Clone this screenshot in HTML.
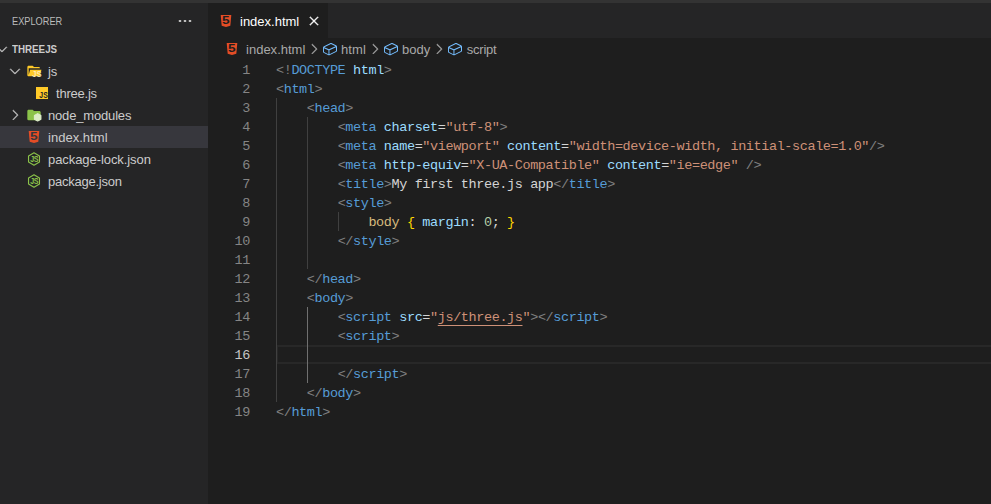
<!DOCTYPE html>
<html>
<head>
<meta charset="utf-8">
<title>index.html - threejs</title>
<style>
*{box-sizing:border-box;margin:0;padding:0}
html,body{width:991px;height:504px;overflow:hidden;background:#1e1e1e}
body{position:relative;font-family:"Liberation Sans",sans-serif;font-size:13px;color:#ccc}
.abs{position:absolute}
#topstrip{left:0;top:0;width:991px;height:3px;background:#333333}
#sidebar{left:0;top:3px;width:208px;height:501px;background:#252526}
#tabbar{left:208px;top:3px;width:783px;height:35px;background:#252526}
#tab{left:208px;top:3px;width:120px;height:35px;background:#1e1e1e}
.t{position:absolute;white-space:nowrap;line-height:22px;height:22px}
.row{position:absolute;left:0;width:208px;height:22px}
.sel{background:#37373d}
.code{position:absolute;left:276px;margin-top:1px;white-space:pre;font-family:"Liberation Mono",monospace;font-size:13.5px;letter-spacing:-0.4px;line-height:19px;height:19px;color:#d4d4d4}
.ln{position:absolute;left:208px;width:42px;margin-top:1px;text-align:right;font-family:"Liberation Mono",monospace;font-size:13.5px;letter-spacing:-0.4px;line-height:19px;height:19px;color:#858585}
.g{color:#808080}.b{color:#569cd6}.l{color:#9cdcfe}.s{color:#ce9178}.y{color:#d7ba7d}.n{color:#b5cea8}.br{color:#ffd700}
.cur{color:#c6c6c6}
u{text-decoration:underline;text-decoration-thickness:1px;text-underline-offset:3.500px;text-decoration-skip-ink:none}
.guide{position:absolute;width:1px;background:#404040}
</style>
</head>
<body>
<div class="abs" id="topstrip"></div>
<div class="abs" id="sidebar"></div>
<div class="abs" id="tabbar"></div>
<div class="abs" id="tab"></div>

<!-- sidebar -->
<div class="t" id="t_explorer" style="transform:scaleX(0.838);transform-origin:0 0;left:12px;top:10px;font-size:11px;color:#bbbbbb">EXPLORER</div>
<svg class="abs" style="left:177px;top:13px" width="16" height="16" viewBox="0 0 16 16"><ellipse cx="3" cy="8" rx="1.400" ry="1.100" fill="#d0d0d0"/><ellipse cx="8" cy="8" rx="1.400" ry="1.100" fill="#d0d0d0"/><ellipse cx="13" cy="8" rx="1.400" ry="1.100" fill="#d0d0d0"/></svg>
<svg class="abs" style="left:-6px;top:41px" width="16" height="16" viewBox="0 0 16 16"><path d="M7.976 10.072l4.357-4.357.62.618L8.284 11h-.618L3 6.333l.619-.618 4.357 4.357z" fill="#c5c5c5" stroke="#c5c5c5" stroke-width="0.400"/></svg>
<div class="t" id="t_threejs" style="transform:scaleX(0.889);transform-origin:0 0;left:12px;top:38px;font-size:11px;font-weight:bold;color:#cccccc">THREEJS</div>
<div class="row sel" style="top:126px"></div>
<svg class="abs" style="left:7px;top:63px" width="16" height="16" viewBox="0 0 16 16"><path d="M7.976 10.072l4.357-4.357.62.618L8.284 11h-.618L3 6.333l.619-.618 4.357 4.357z" fill="#c5c5c5" stroke="#c5c5c5" stroke-width="0.400"/></svg>
<svg class="abs" style="left:26px;top:63px" width="16" height="16" viewBox="0 0 24 24"><path d="M19 20H4c-1.110 0-2-.900-2-2V6c0-1.110.890-2 2-2h6l2 2h7a2 2 0 0 1 2 2H4v10l2.140-8h17.070l-2.280 8.500c-.230.870-1.010 1.500-1.930 1.500z" fill="#ffca28"/><text x="0" y="0" transform="translate(16.300 21.300) scale(0.800 1)" text-anchor="middle" font-family="Liberation Sans, sans-serif" font-weight="bold" font-size="14" fill="#ffecb3">JS</text></svg>
<div class="t" id="t_js" style="letter-spacing:-0.15px;left:48px;top:61px">js</div>
<svg class="abs" style="left:34px;top:85px" width="16" height="16" viewBox="0 0 24 24"><path d="M3 3h18v18H3z" fill="#ffca28"/><text x="0" y="0" transform="translate(14.300 19.900) scale(0.820 1)" text-anchor="middle" font-family="Liberation Sans, sans-serif" font-weight="bold" font-size="12.500" fill="#252526">JS</text></svg>
<div class="t" id="t_three" style="letter-spacing:-0.22px;left:56px;top:83px">three.js</div>
<svg class="abs" style="left:7px;top:107px" width="16" height="16" viewBox="0 0 16 16"><path d="M10.072 8.024L5.715 3.667l.618-.62L11 7.716v.618L6.333 13l-.618-.619 4.357-4.357z" fill="#c5c5c5" stroke="#c5c5c5" stroke-width="0.400"/></svg>
<svg class="abs" style="left:26px;top:107px" width="16" height="16" viewBox="0 0 24 24"><path d="M10 4H4c-1.110 0-2 .890-2 2v12a2 2 0 0 0 2 2h16a2 2 0 0 0 2-2V8c0-1.110-.900-2-2-2h-8l-2-2z" fill="#8bc34a"/><path d="M17.500 9.900L22.400 12.700v5.600l-4.900 2.800-4.900-2.800v-5.600z" fill="#dcedc8" stroke="#dcedc8" stroke-width="1.600" stroke-linejoin="round"/></svg>
<div class="t" id="t_node" style="letter-spacing:-0.17px;left:48px;top:105px">node_modules</div>
<svg class="abs" style="left:26px;top:129px" width="16" height="16" viewBox="0 0 24 24"><path d="M4.070 3h15.860L18.500 19.200 12 21l-6.500-1.800z" fill="#e44d26"/><text x="0" y="0" transform="translate(11.900 16.400) scale(1.420 1.070)" text-anchor="middle" font-family="Liberation Sans, sans-serif" font-weight="bold" font-size="14.500" fill="#37373d">5</text></svg>
<div class="t" id="t_index" style="letter-spacing:0.03px;left:48px;top:127px">index.html</div>
<svg class="abs" style="left:26px;top:151px" width="16" height="16" viewBox="0 0 24 24"><path d="M12 2.700L20.200 7.400v9.200L12 21.300 3.800 16.600V7.400z" fill="none" stroke="#8bc34a" stroke-width="1.700" stroke-linejoin="round"/><text x="0" y="0" transform="translate(12.300 16.700) scale(0.820 1)" text-anchor="middle" font-family="Liberation Sans, sans-serif" font-weight="bold" font-size="13" fill="#8bc34a" letter-spacing="-0.500">JS</text></svg>
<div class="t" id="t_plock" style="letter-spacing:-0.07px;left:48px;top:149px">package-lock.json</div>
<svg class="abs" style="left:26px;top:173px" width="16" height="16" viewBox="0 0 24 24"><path d="M12 2.700L20.200 7.400v9.200L12 21.300 3.800 16.600V7.400z" fill="none" stroke="#8bc34a" stroke-width="1.700" stroke-linejoin="round"/><text x="0" y="0" transform="translate(12.300 16.700) scale(0.820 1)" text-anchor="middle" font-family="Liberation Sans, sans-serif" font-weight="bold" font-size="13" fill="#8bc34a" letter-spacing="-0.500">JS</text></svg>
<div class="t" id="t_pkg" style="letter-spacing:-0.24px;left:48px;top:171px">package.json</div>

<!-- tab -->
<svg class="abs" style="left:218px;top:13px" width="16" height="16" viewBox="0 0 24 24"><path d="M4.070 3h15.860L18.500 19.200 12 21l-6.500-1.800z" fill="#e44d26"/><text x="0" y="0" transform="translate(11.900 16.400) scale(1.420 1.070)" text-anchor="middle" font-family="Liberation Sans, sans-serif" font-weight="bold" font-size="14.500" fill="#1e1e1e">5</text></svg>
<div class="t" id="t_tab" style="letter-spacing:0.00px;left:240px;top:11px;color:#ffffff">index.html</div>
<svg class="abs" style="left:306px;top:13px" width="16" height="16" viewBox="0 0 16 16"><path d="M8 8.707l3.646 3.647.708-.707L8.707 8l3.647-3.646-.707-.708L8 7.293 4.354 3.646l-.707.708L7.293 8l-3.646 3.646.707.708L8 8.707z" fill="#ffffff" stroke="#ffffff" stroke-width="0.400"/></svg>

<!-- breadcrumbs -->
<svg class="abs" style="left:224px;top:41px" width="16" height="16" viewBox="0 0 24 24"><path d="M4.070 3h15.860L18.500 19.200 12 21l-6.500-1.800z" fill="#e44d26"/><text x="0" y="0" transform="translate(11.900 16.400) scale(1.420 1.070)" text-anchor="middle" font-family="Liberation Sans, sans-serif" font-weight="bold" font-size="14.500" fill="#1e1e1e">5</text></svg>
<div class="t" id="t_bc1" style="letter-spacing:0.01px;left:246px;top:39px;color:#a9a9a9">index.html</div>
<svg class="abs" style="left:305.5px;top:41px" width="16" height="16" viewBox="0 0 16 16"><path d="M10.072 8.024L5.715 3.667l.618-.62L11 7.716v.618L6.333 13l-.618-.619 4.357-4.357z" fill="#a9a9a9" stroke="#a9a9a9" stroke-width="0.400"/></svg>
<svg class="abs" style="left:321.500px;top:41px" width="16" height="16" viewBox="0 0 16 16"><path d="M14.45 4.5l-5-2.500h-.900l-7 3.500-.550.890v4.500l.550.900 5 2.500h.900l7-3.500.550-.900v-4.500l-.550-.890zm-8 8.640l-4.500-2.250V7.170l4.500 2v3.970zm.500-4.800L2.290 6.230l6.660-3.340 4.670 2.340-6.670 3.110zm7 1.550l-6.500 3.250V9.210l6.500-3v3.680z" fill="#75beff"/></svg>
<div class="t" id="t_bc2" style="letter-spacing:0.11px;left:341px;top:39px;color:#a9a9a9">html</div>
<svg class="abs" style="left:367px;top:41px" width="16" height="16" viewBox="0 0 16 16"><path d="M10.072 8.024L5.715 3.667l.618-.62L11 7.716v.618L6.333 13l-.618-.619 4.357-4.357z" fill="#a9a9a9" stroke="#a9a9a9" stroke-width="0.400"/></svg>
<svg class="abs" style="left:383px;top:41px" width="16" height="16" viewBox="0 0 16 16"><path d="M14.45 4.5l-5-2.500h-.900l-7 3.500-.550.890v4.500l.550.900 5 2.500h.900l7-3.500.550-.900v-4.500l-.550-.890zm-8 8.640l-4.500-2.250V7.170l4.500 2v3.970zm.500-4.800L2.290 6.230l6.660-3.340 4.670 2.340-6.670 3.110zm7 1.550l-6.500 3.250V9.210l6.500-3v3.680z" fill="#75beff"/></svg>
<div class="t" id="t_bc3" style="letter-spacing:0.02px;left:402px;top:39px;color:#a9a9a9">body</div>
<svg class="abs" style="left:431px;top:41px" width="16" height="16" viewBox="0 0 16 16"><path d="M10.072 8.024L5.715 3.667l.618-.62L11 7.716v.618L6.333 13l-.618-.619 4.357-4.357z" fill="#a9a9a9" stroke="#a9a9a9" stroke-width="0.400"/></svg>
<svg class="abs" style="left:447px;top:41px" width="16" height="16" viewBox="0 0 16 16"><path d="M14.45 4.5l-5-2.500h-.900l-7 3.500-.550.890v4.500l.550.900 5 2.500h.900l7-3.500.550-.900v-4.500l-.550-.890zm-8 8.640l-4.500-2.250V7.170l4.500 2v3.970zm.500-4.800L2.290 6.230l6.660-3.340 4.670 2.340-6.670 3.110zm7 1.550l-6.500 3.250V9.210l6.500-3v3.680z" fill="#75beff"/></svg>
<div class="t" id="t_bc4" style="letter-spacing:-0.23px;left:466.800px;top:39px;color:#a9a9a9">script</div>

<!-- current line -->
<div class="abs" style="left:276px;top:345px;width:715px;height:19px;border:2px solid #282828;border-right:none"></div>

<!-- guides -->
<div class="guide" style="left:276px;top:98px;height:304px"></div>
<div class="guide" style="left:307px;top:117px;height:152px"></div>
<div class="guide" style="left:338px;top:212px;height:19px"></div>
<div class="guide" style="left:307px;top:307px;height:76px;background:#707070"></div>

<div id="code">
<div class="ln" style="top:60px">1</div>
<div class="code" style="top:60px"><span class="g">&lt;!</span><span class="b">DOCTYPE</span> <span class="l">html</span><span class="g">&gt;</span></div>
<div class="ln" style="top:79px">2</div>
<div class="code" style="top:79px"><span class="g">&lt;</span><span class="b">html</span><span class="g">&gt;</span></div>
<div class="ln" style="top:98px">3</div>
<div class="code" style="top:98px">    <span class="g">&lt;</span><span class="b">head</span><span class="g">&gt;</span></div>
<div class="ln" style="top:117px">4</div>
<div class="code" style="top:117px">        <span class="g">&lt;</span><span class="b">meta</span> <span class="l">charset</span>=<span class="s">"utf-8"</span><span class="g">&gt;</span></div>
<div class="ln" style="top:136px">5</div>
<div class="code" style="top:136px">        <span class="g">&lt;</span><span class="b">meta</span> <span class="l">name</span>=<span class="s">"viewport"</span> <span class="l">content</span>=<span class="s">"width=device-width, initial-scale=1.0"</span><span class="g">/&gt;</span></div>
<div class="ln" style="top:155px">6</div>
<div class="code" style="top:155px">        <span class="g">&lt;</span><span class="b">meta</span> <span class="l">http-equiv</span>=<span class="s">"X-UA-Compatible"</span> <span class="l">content</span>=<span class="s">"ie=edge"</span> <span class="g">/&gt;</span></div>
<div class="ln" style="top:174px">7</div>
<div class="code" style="top:174px">        <span class="g">&lt;</span><span class="b">title</span><span class="g">&gt;</span>My first three.js app<span class="g">&lt;/</span><span class="b">title</span><span class="g">&gt;</span></div>
<div class="ln" style="top:193px">8</div>
<div class="code" style="top:193px">        <span class="g">&lt;</span><span class="b">style</span><span class="g">&gt;</span></div>
<div class="ln" style="top:212px">9</div>
<div class="code" style="top:212px">            <span class="y">body</span> <span class="br">{</span> <span class="l">margin</span>: <span class="n">0</span>; <span class="br">}</span></div>
<div class="ln" style="top:231px">10</div>
<div class="code" style="top:231px">        <span class="g">&lt;/</span><span class="b">style</span><span class="g">&gt;</span></div>
<div class="ln" style="top:250px">11</div>
<div class="ln" style="top:269px">12</div>
<div class="code" style="top:269px">    <span class="g">&lt;/</span><span class="b">head</span><span class="g">&gt;</span></div>
<div class="ln" style="top:288px">13</div>
<div class="code" style="top:288px">    <span class="g">&lt;</span><span class="b">body</span><span class="g">&gt;</span></div>
<div class="ln" style="top:307px">14</div>
<div class="code" style="top:307px">        <span class="g">&lt;</span><span class="b">script</span> <span class="l">src</span>=<span class="s">"<u>js/three.js</u>"</span><span class="g">&gt;&lt;/</span><span class="b">script</span><span class="g">&gt;</span></div>
<div class="ln" style="top:326px">15</div>
<div class="code" style="top:326px">        <span class="g">&lt;</span><span class="b">script</span><span class="g">&gt;</span></div>
<div class="ln cur" style="top:345px">16</div>
<div class="ln" style="top:364px">17</div>
<div class="code" style="top:364px">        <span class="g">&lt;/</span><span class="b">script</span><span class="g">&gt;</span></div>
<div class="ln" style="top:383px">18</div>
<div class="code" style="top:383px">    <span class="g">&lt;/</span><span class="b">body</span><span class="g">&gt;</span></div>
<div class="ln" style="top:402px">19</div>
<div class="code" style="top:402px"><span class="g">&lt;/</span><span class="b">html</span><span class="g">&gt;</span></div>
</div>
</body>
</html>
